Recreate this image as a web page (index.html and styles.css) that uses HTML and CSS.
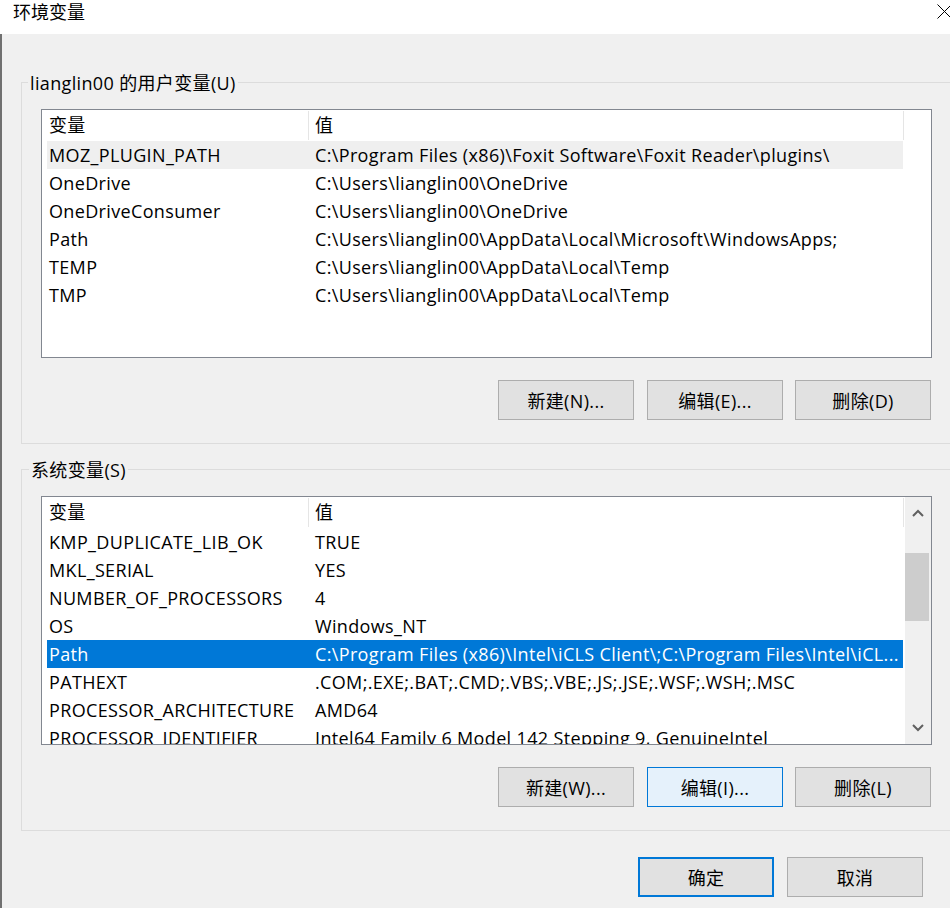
FILE: index.html
```html
<!DOCTYPE html>
<html lang="zh-CN">
<head>
<meta charset="utf-8">
<title>环境变量</title>
<link rel="stylesheet" href="styles.css">
</head>
<body>
<div class="window">
  <div class="titlebar">
    <span class="title">环境变量</span>
    <svg class="close" width="15" height="15" viewBox="0 0 15 15"><path d="M0.5 0.5 L14.5 14.5 M14.5 0.5 L0.5 14.5" stroke="#000" stroke-width="1" fill="none"/></svg>
  </div>
  <div class="client">
    <section class="group">
      <div class="group-label">lianglin00 的用户变量(U)</div>
      <div class="list">
        <div class="list-body">
          <div class="row header"><div class="cell c1">变量</div><div class="cell c2">值</div><div class="cell c3"></div></div>
          <div class="row hover"><div class="cell c1">MOZ_PLUGIN_PATH</div><div class="cell c2">C:\Program Files (x86)\Foxit Software\Foxit Reader\plugins\</div></div>
          <div class="row"><div class="cell c1">OneDrive</div><div class="cell c2">C:\Users\lianglin00\OneDrive</div></div>
          <div class="row"><div class="cell c1">OneDriveConsumer</div><div class="cell c2">C:\Users\lianglin00\OneDrive</div></div>
          <div class="row"><div class="cell c1">Path</div><div class="cell c2">C:\Users\lianglin00\AppData\Local\Microsoft\WindowsApps;</div></div>
          <div class="row"><div class="cell c1">TEMP</div><div class="cell c2">C:\Users\lianglin00\AppData\Local\Temp</div></div>
          <div class="row"><div class="cell c1">TMP</div><div class="cell c2">C:\Users\lianglin00\AppData\Local\Temp</div></div>
        </div>
      </div>
      <div class="buttons">
        <button class="btn">新建(N)...</button>
        <button class="btn">编辑(E)...</button>
        <button class="btn">删除(D)</button>
      </div>
    </section>

    <section class="group group-sys">
      <div class="group-label">系统变量(S)</div>
      <div class="list">
        <div class="list-body">
          <div class="row header"><div class="cell c1">变量</div><div class="cell c2">值</div><div class="cell c3"></div></div>
          <div class="row"><div class="cell c1">KMP_DUPLICATE_LIB_OK</div><div class="cell c2">TRUE</div></div>
          <div class="row"><div class="cell c1">MKL_SERIAL</div><div class="cell c2">YES</div></div>
          <div class="row"><div class="cell c1">NUMBER_OF_PROCESSORS</div><div class="cell c2">4</div></div>
          <div class="row"><div class="cell c1">OS</div><div class="cell c2">Windows_NT</div></div>
          <div class="row selected"><div class="cell c1">Path</div><div class="cell c2">C:\Program Files (x86)\Intel\iCLS Client\;C:\Program Files\Intel\iCL...</div></div>
          <div class="row"><div class="cell c1">PATHEXT</div><div class="cell c2">.COM;.EXE;.BAT;.CMD;.VBS;.VBE;.JS;.JSE;.WSF;.WSH;.MSC</div></div>
          <div class="row"><div class="cell c1">PROCESSOR_ARCHITECTURE</div><div class="cell c2">AMD64</div></div>
          <div class="row"><div class="cell c1">PROCESSOR_IDENTIFIER</div><div class="cell c2">Intel64 Family 6 Model 142 Stepping 9, GenuineIntel</div></div>
        </div>
        <div class="scrollbar">
          <div class="arrow"><svg width="12" height="8" viewBox="0 0 12 8"><path d="M1 7 L6 2 L11 7" stroke="#606060" stroke-width="2" fill="none"/></svg></div>
          <div class="track"><div class="thumb"></div></div>
          <div class="arrow"><svg width="12" height="8" viewBox="0 0 12 8"><path d="M1 1 L6 6 L11 1" stroke="#606060" stroke-width="2" fill="none"/></svg></div>
        </div>
      </div>
      <div class="buttons">
        <button class="btn">新建(W)...</button>
        <button class="btn focused">编辑(I)...</button>
        <button class="btn">删除(L)</button>
      </div>
    </section>

    <div class="footer">
      <button class="btn default">确定</button>
      <button class="btn">取消</button>
    </div>
  </div>
</div>
</body>
</html>
```

FILE: styles.css
```css
html, body {
  margin: 0;
  padding: 0;
}
body {
  width: 950px;
  height: 908px;
  overflow: hidden;
  background: #f0f0f0;
  font-family: "Open Sans", "Noto Sans CJK SC", sans-serif;
  font-size: 18px;
  letter-spacing: 0.35px;
  color: #000;
}
.window {
  width: 950px;
  height: 908px;
  display: flex;
  flex-direction: column;
}
.titlebar {
  height: 34px;
  flex: none;
  background: #fff;
  display: flex;
  justify-content: space-between;
  align-items: flex-start;
}
.title {
  padding-left: 13px;
  line-height: 24px;
  letter-spacing: 0;
}
.close {
  margin-top: 4px;
  margin-right: -2px;
}
.client {
  flex: 1;
  box-shadow: inset 2px 0 #707070;
  padding: 48px 0 0 21px;
  display: flex;
  flex-direction: column;
  overflow: hidden;
}
.group {
  flex: none;
  width: 960px;
  height: 362px;
  box-sizing: border-box;
  border: 1px solid #dcdcdc;
  padding-left: 19px;
}
.group-sys {
  margin-top: 25px;
}
.group-label {
  width: fit-content;
  margin: -12px 0 0 -13px;
  padding: 0 2px;
  line-height: 24px;
  background: #f0f0f0;
}
.group-sys .group-label {
  margin-left: -12px;
}
.list {
  margin-top: 14px;
  width: 891px;
  height: 249px;
  box-sizing: border-box;
  border: 1px solid #828790;
  background: #fff;
  display: flex;
}
.list-body {
  flex: 1;
  padding-left: 5px;
  overflow: hidden;
}
.row {
  display: grid;
  grid-template-columns: 261px 595px;
  width: 856px;
  height: 28px;
  align-items: center;
  white-space: nowrap;
}
.row.header {
  grid-template-columns: 261px 595px 1fr;
  width: auto;
  height: 31px;
  align-items: stretch;
}
.cell {
  line-height: 28px;
  overflow: hidden;
}
.c1 {
  padding-left: 2px;
}
.c2 {
  padding-left: 7px;
}
.header .cell {
  margin: 1px 0;
  line-height: 29px;
}
.header .c2,
.header .c3 {
  border-left: 1px solid #e5e5e5;
  padding-left: 6px;
}
.row.hover {
  background: #efefef;
}
.row.selected {
  background: #0078d7;
  color: #fff;
}
.scrollbar {
  width: 26px;
  flex: none;
  background: #f0f0f0;
  display: flex;
  flex-direction: column;
}
.arrow {
  height: 32px;
  display: flex;
  align-items: center;
  justify-content: center;
  padding-right: 1px;
}
.track {
  flex: 1;
}
.thumb {
  margin-top: 24px;
  width: 24px;
  height: 68px;
  background: #cdcdcd;
}
.buttons {
  margin-top: 22px;
  width: 890px;
  display: flex;
  justify-content: flex-end;
  gap: 12px;
}
.buttons .btn:first-child {
  margin-right: 1px;
}
.btn {
  width: 136px;
  height: 40px;
  box-sizing: border-box;
  background: #e1e1e1;
  border: 1px solid #adadad;
  border-radius: 0;
  font-family: inherit;
  font-size: 18px;
  letter-spacing: 0.35px;
  color: #000;
  padding: 0;
  margin: 0;
}
.btn.focused {
  background: #e5f1fb;
  border-color: #0078d7;
}
.btn.default {
  border: 2px solid #0078d7;
}
.footer {
  margin-top: 26px;
  width: 902px;
  display: flex;
  justify-content: flex-end;
  gap: 13px;
}
```
